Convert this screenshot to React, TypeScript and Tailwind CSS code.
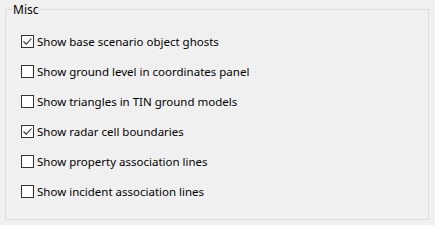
const options = [
  { label: "Show base scenario object ghosts", checked: true },
  { label: "Show ground level in coordinates panel", checked: false },
  { label: "Show triangles in TIN ground models", checked: false },
  { label: "Show radar cell boundaries", checked: true },
  { label: "Show property association lines", checked: false },
  { label: "Show incident association lines", checked: false },
];

export default function App() {
  return (
    <div className="h-[225px] w-[435px] bg-[#f0f0f0] pl-[5px] pt-[9px] text-[11.5px] text-[#000] [font-family:'Noto_Sans',sans-serif]">
      <div className="relative h-[211px] w-[424px] border border-[#dcdcdc]">
        <span className="absolute -top-[8px] left-[6px] bg-[#f0f0f0] px-[1px] text-[12px] leading-[15px]">Misc</span>
        <div className="flex flex-col gap-[13px] pl-[15px] pt-[23px]">
          {options.map((o) => (
            <label key={o.label} className="flex h-[17px] items-center">
              <span className="flex size-[13px] items-center justify-center border border-[#333] bg-white">
                {o.checked && (
                  <svg width="11" height="11" viewBox="0 0 11 11" fill="none">
                    <path d="M1.5 5.5 L4.2 8.2 L9.5 2.5" stroke="#333" strokeWidth="1.1" />
                  </svg>
                )}
              </span>
              <span className="ml-[3px] leading-[17px]">{o.label}</span>
            </label>
          ))}
        </div>
      </div>
    </div>
  );
}
